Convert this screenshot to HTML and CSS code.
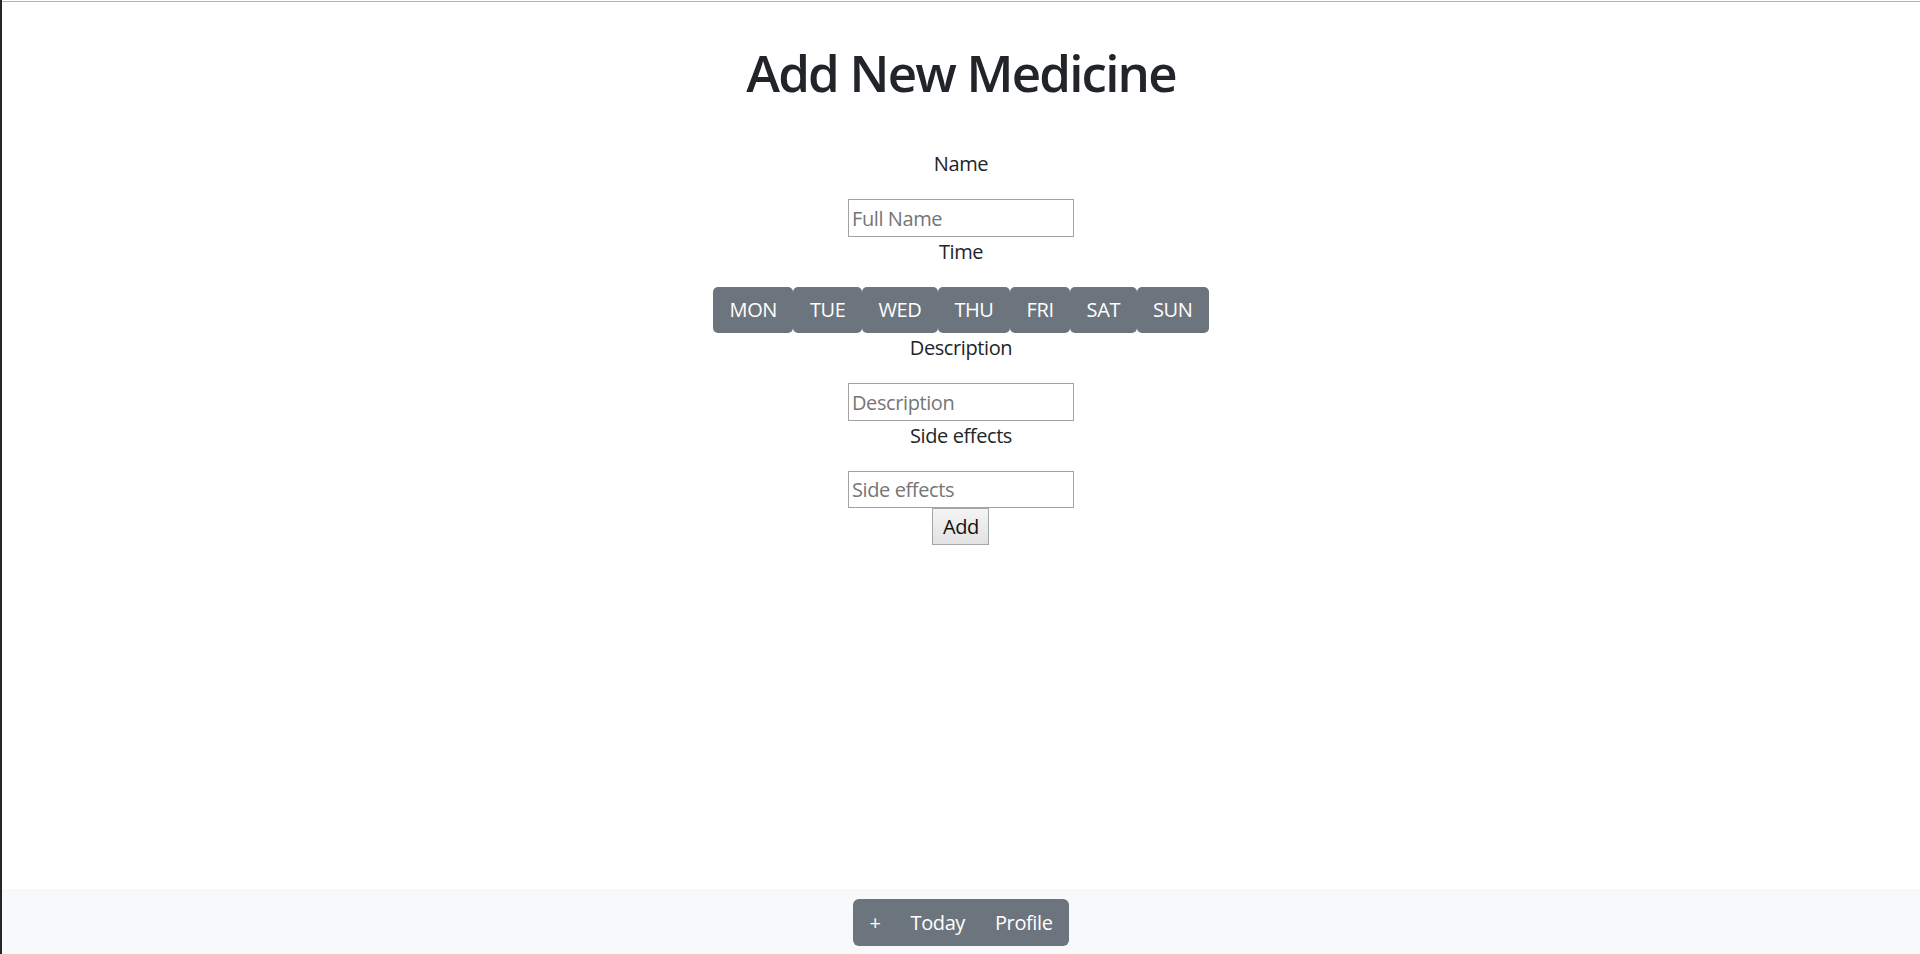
FILE: index.html
```html
<!DOCTYPE html>
<html lang="en">
<head>
<meta charset="utf-8">
<title>Add New Medicine</title>
<link rel="stylesheet" href="styles.css">
</head>
<body>
  <div class="topline"></div>
  <main class="page">
    <h1 class="title">Add New Medicine</h1>
    <form class="med-form">
      <p class="label">Name</p>
      <input class="field" type="text" placeholder="Full Name">
      <p class="label">Time</p>
      <div class="days">
        <button type="button" class="day">MON</button>
        <button type="button" class="day">TUE</button>
        <button type="button" class="day">WED</button>
        <button type="button" class="day">THU</button>
        <button type="button" class="day">FRI</button>
        <button type="button" class="day">SAT</button>
        <button type="button" class="day">SUN</button>
      </div>
      <p class="label">Description</p>
      <input class="field" type="text" placeholder="Description">
      <p class="label">Side effects</p>
      <input class="field field-last" type="text" placeholder="Side effects">
      <button type="button" class="add-btn">Add</button>
    </form>
  </main>
  <footer class="footer">
    <nav class="nav-group">
      <a class="nav-item" href="#">+</a>
      <a class="nav-item" href="#">Today</a>
      <a class="nav-item" href="#">Profile</a>
    </nav>
  </footer>
</body>
</html>
```

FILE: styles.css
```css
* {
  box-sizing: border-box;
}

html, body {
  height: 100%;
}

body {
  margin: 0;
  border-left: 2px solid #262626;
  background: #ffffff;
  color: #212529;
  font-family: "Open Sans", "Noto Sans", "Liberation Sans", sans-serif;
  font-size: 20px;
  display: flex;
  flex-direction: column;
  min-height: 954px;
}

.topline {
  margin-top: 1px;
  height: 1px;
  background: #b4b4b4;
  flex: none;
}

.page {
  flex: 1;
  display: flex;
  flex-direction: column;
  align-items: center;
  padding-top: 39px;
}

.title {
  margin: 0 0 46px;
  font-size: 51px;
  line-height: 62px;
  font-weight: 600;
  letter-spacing: -1.8px;
  color: #212529;
}

.med-form {
  display: flex;
  flex-direction: column;
  align-items: center;
}

.label {
  margin: 0 0 20px;
  font-size: 20px;
  line-height: 30px;
  letter-spacing: -0.4px;
  color: #212529;
}

.field {
  width: 226px;
  height: 38px;
  margin: 0;
  padding: 0 3px;
  border: 1px solid #a3a3a3;
  border-radius: 0;
  background: #fff;
  font-family: inherit;
  font-size: 20px;
  letter-spacing: -0.4px;
  color: #212529;
  outline: none;
}

.field-last {
  height: 37px;
}

.field::placeholder {
  color: #767676;
}

.days {
  display: flex;
}

.day {
  height: 46px;
  margin: 0;
  padding: 0 16.5px;
  border: none;
  border-radius: 5px;
  background: #6c757d;
  color: #ffffff;
  font-family: inherit;
  font-size: 20px;
  letter-spacing: -0.4px;
  line-height: 30px;
  cursor: pointer;
}

.add-btn {
  width: 57px;
  height: 37px;
  margin: 0;
  padding: 0;
  border: 1px solid #a6a6a6;
  border-radius: 0;
  background: linear-gradient(#f4f4f4, #e2e2e2);
  color: #111;
  font-family: inherit;
  font-size: 20px;
  letter-spacing: -0.4px;
}

.footer {
  flex: none;
  height: 65px;
  background: #f8f9fa;
  display: flex;
  justify-content: center;
  padding-top: 10px;
}

.nav-group {
  display: flex;
  align-items: center;
  height: 47px;
  padding: 0 2px;
  background: #6c757d;
  border-radius: 6px;
}

.nav-item {
  padding: 0 15px;
  color: #ffffff;
  text-decoration: none;
  font-size: 20px;
  letter-spacing: -0.4px;
  line-height: 30px;
}
```
